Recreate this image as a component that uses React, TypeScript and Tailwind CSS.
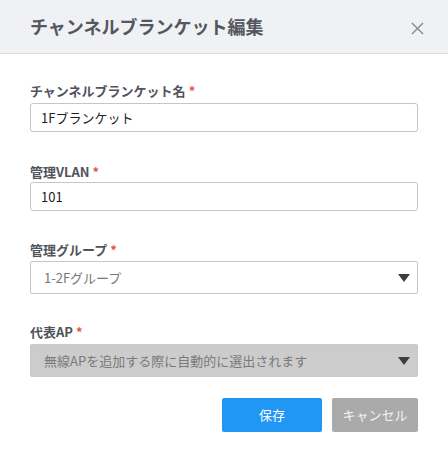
import React from 'react';

const Label = ({ text }: { text: string }) => (
  <div className="h-[20px] flex items-center text-[13px] font-bold text-[#50545c] leading-none">
    {text}
    <span className="text-[#e8533f] ml-[3px]">*</span>
  </div>
);

const Caret = () => (
  <svg width="12" height="8" viewBox="0 0 12 8" className="absolute right-[7px] top-1/2 -translate-y-1/2">
    <path d="M0 0 H12 L6 8 Z" fill="#3a3d42" />
  </svg>
);

export default function App() {
  return (
    <div
      className="w-[448px] h-[451px] bg-white"
      style={{ fontFamily: '"Noto Sans CJK JP", "Noto Sans", sans-serif' }}
    >
      <div className="h-[54px] bg-[#f0f1f5] border-b border-[#dcdde1] flex items-center justify-between pl-[30px] pr-[24px]">
        <h1 className="text-[18px] font-bold text-[#54575e] leading-none -mt-[1px]">チャンネルブランケット編集</h1>
        <svg width="13" height="13" viewBox="0 0 14 14" className="mt-[3px]">
          <path d="M1 1 L13 13 M13 1 L1 13" stroke="#8a8e96" strokeWidth="1.6" />
        </svg>
      </div>

      <div className="px-[30px] pt-[26px]">
        <Label text="チャンネルブランケット名" />
        <div className="mt-[3px] h-[29px] border border-[#c4c6cb] rounded-[3px] flex items-center px-[10px] text-[13px] text-[#222]">
          1Fブランケット
        </div>

        <div className="mt-[29px]">
          <Label text="管理VLAN" />
        </div>
        <div className="mt-[1px] h-[29px] border border-[#c4c6cb] rounded-[3px] flex items-center px-[10px] text-[13px] text-[#222]">
          101
        </div>

        <div className="mt-[28px]">
          <Label text="管理グループ" />
        </div>
        <div className="relative mt-[2px] h-[33px] border border-[#c4c6cb] rounded-[2px] flex items-center px-[13px] text-[13px] text-[#777]">
          1-2Fグループ
          <Caret />
        </div>

        <div className="mt-[27px]">
          <Label text="代表AP" />
        </div>
        <div className="relative mt-[3px] h-[33px] bg-[#cccccc] border border-[#c9c9c9] rounded-[2px] flex items-center px-[13px] text-[13px] text-[#7a7a7a]">
          無線APを追加する際に自動的に選出されます
          <Caret />
        </div>

        <div className="mt-[21px] flex justify-end gap-[10px]">
          <button className="w-[100px] h-[34px] bg-[#2196f3] rounded-[2px] text-white text-[13px]">保存</button>
          <button className="w-[86px] h-[34px] bg-[#aaaaaa] rounded-[2px] text-[#f2f2f2] text-[13px]">キャンセル</button>
        </div>
      </div>
    </div>
  );
}
